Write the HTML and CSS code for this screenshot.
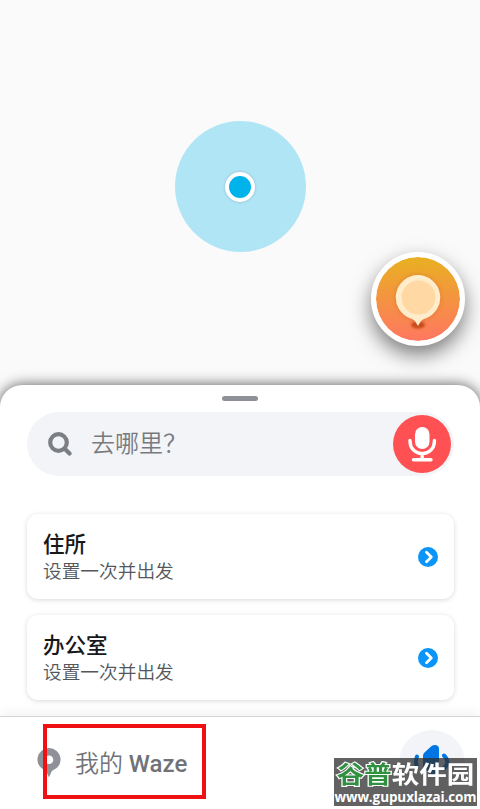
FILE: index.html
```html
<!DOCTYPE html>
<html lang="zh-CN">
<head>
    <meta charset="UTF-8">
    <meta name="viewport" content="width=device-width, initial-scale=1.0">
    <title>Waze</title>
    <link rel="stylesheet" href="styles.css">
</head>
<body>
    <div class="app">
        <div class="map">
            <div class="location"><div class="location-dot"></div></div>
            <button class="report-button" aria-label="报告">
                <svg width="84" height="84" viewBox="0 0 84 84">
                    <ellipse class="pin-shadow" cx="42" cy="68" rx="7" ry="3.5"/>
                    <path class="pin" d="M42 18a22.500 22.500 0 0 1 7 43.800c-3 .8-4 2-7 7.200-3-5.200-4-6.400-7-7.200A22.500 22.500 0 0 1 42 18z"/>
                    <circle class="pin-inner" cx="42.500" cy="40.500" r="17"/>
                </svg>
            </button>
        </div>

        <div class="sheet">
            <div class="handle"></div>
            <div class="search">
                <svg class="search-icon" width="24" height="24" viewBox="0 0 24 24">
                    <circle cx="10.500" cy="10.500" r="8.300"/>
                    <path d="M17 17l4.500 4.500"/>
                </svg>
                <span class="search-text">去哪里？</span>
                <button class="mic-button" aria-label="语音搜索">
                    <svg width="58" height="58" viewBox="0 0 58 58">
                        <rect class="mic-body" x="22" y="12" width="14.500" height="22" rx="7.250"/>
                        <path class="mic-line" d="M17 25.500v1a12.200 12.200 0 0 0 24.400 0v-1M29.200 38.500v6M20.500 44.800h17.500"/>
                    </svg>
                </button>
            </div>

            <div class="places">
                <div class="place">
                    <div class="place-info">
                        <div class="place-name">住所</div>
                        <div class="place-hint">设置一次并出发</div>
                    </div>
                    <svg class="arrow" width="20" height="20" viewBox="0 0 20 20">
                        <circle cx="10" cy="10" r="10"/>
                        <path d="M8.500 5.200l4.800 4.800-4.800 4.800"/>
                    </svg>
                </div>
                <div class="place">
                    <div class="place-info">
                        <div class="place-name">办公室</div>
                        <div class="place-hint">设置一次并出发</div>
                    </div>
                    <svg class="arrow" width="20" height="20" viewBox="0 0 20 20">
                        <circle cx="10" cy="10" r="10"/>
                        <path d="M8.500 5.200l4.800 4.800-4.800 4.800"/>
                    </svg>
                </div>
            </div>

            <div class="bottom-bar">
                <svg class="my-pin" width="24" height="30" viewBox="0 0 24 30">
                    <path fill-rule="evenodd" d="M12 0a11.500 11.500 0 0 1 4 22.300c-1.500.7-1.800 2.500-4 7.200-2.200-4.700-2.500-6.500-4-7.200A11.500 11.500 0 0 1 12 0zm0 7.500a4.300 4.300 0 1 0 0 8.600 4.300 4.300 0 0 0 0-8.600z"/>
                </svg>
                <span class="my-waze">我的 <b>Waze</b></span>
                <button class="sound-button" aria-label="声音">
                    <svg width="36" height="36" viewBox="0 0 36 36">
                        <path d="M10 9l7-6.500c3.500-2.500 8-1.500 8 2v25c0 3.500-4 5-7 2.500L13 27h-1a3 3 0 0 1-3-3V12a5 5 0 0 1 1-3z"/>
                        <path class="wave" d="M3 12.500q-2 5 0 10.500M30 11.500q6.500 6.500 0 13"/>
                    </svg>
                </button>
            </div>
        </div>

        <!-- Highlight around the "My Waze" entry -->
        <div class="highlight"></div>

        <div class="watermark">
            <div class="watermark-name"><span>谷普</span>软件园</div>
            <div class="watermark-url">www.gupuxlazai.com</div>
        </div>
    </div>
</body>
</html>
```
FILE: styles.css
```css
* {
    box-sizing: border-box;
}

body {
    margin: 0;
    font-family: Roboto, "Noto Sans CJK SC", sans-serif;
    background-color: #fafafa;
}

button {
    display: flex;
    justify-content: center;
    align-items: center;
    padding: 0;
    border: none;
    border-radius: 50%;
}

svg {
    display: block;
    flex-shrink: 0;
}

.app {
    position: relative;
    width: 480px;
    height: 809px;
    overflow: hidden;
}

.map {
    position: relative;
    height: 385px;
    padding-top: 121px;
}

.location {
    display: flex;
    justify-content: center;
    align-items: center;
    width: 131px;
    height: 131px;
    margin: 0 auto;
    border-radius: 50%;
    background: #b0e5f6;
}

.location-dot {
    width: 30px;
    height: 30px;
    border: 4px solid white;
    border-radius: 50%;
    background: #00b3ea;
    box-shadow: 0 0 3px rgba(0, 0, 0, 0.2);
}

.report-button {
    position: absolute;
    left: 371px;
    top: 252px;
    width: 94px;
    height: 94px;
    border: 5px solid white;
    background: linear-gradient(#e9b021, #ff7761);
    background-clip: padding-box;
    background-color: white;
    box-shadow: 0 9px 20px rgba(0, 0, 0, 0.5);
}

.pin-shadow {
    fill: #c74b1c;
    filter: blur(1px);
}

.pin {
    fill: #ffeccb;
    filter: drop-shadow(0 0 2px rgba(190, 80, 20, 0.4));
}

.pin-inner {
    fill: #ffd8a4;
}

.sheet {
    position: relative;
    display: flex;
    flex-direction: column;
    height: 424px;
    padding-top: 11px;
    border-radius: 22px 22px 0 0;
    background: white;
    box-shadow: 0 0 14px rgba(0, 0, 0, 0.65);
}

.handle {
    width: 36px;
    height: 5px;
    margin: 0 auto;
    border-radius: 3px;
    background: #8e9298;
}

.search {
    display: flex;
    align-items: center;
    height: 64px;
    margin: 11px 26px 0 27px;
    padding: 0 3px 0 21px;
    border-radius: 32px;
    background: #f2f4f8;
}

.search-icon {
    fill: none;
    stroke: #7b7e83;
    stroke-width: 4.2;
    stroke-linecap: round;
}

.search-text {
    flex: 1;
    margin-left: 19px;
    font-size: 24px;
    font-weight: 350;
    line-height: 34px;
    color: #777b80;
}

.mic-button {
    width: 58px;
    height: 58px;
    background: #ff5153;
}

.mic-body {
    fill: white;
}

.mic-line {
    fill: none;
    stroke: white;
    stroke-width: 3.4;
    stroke-linecap: round;
}

.places {
    display: flex;
    flex-direction: column;
    gap: 16px;
    margin: 38px 26px 0 27px;
}

.place {
    display: flex;
    justify-content: space-between;
    align-items: center;
    height: 85px;
    padding: 0 16px;
    border-radius: 11px;
    background: white;
    box-shadow: 0 1px 5px rgba(0, 0, 0, 0.15);
}

.place-name {
    padding-top: 2px;
    font-size: 21.5px;
    font-weight: 500;
    line-height: 30px;
    color: #16181a;
}

.place-hint {
    font-size: 18.7px;
    font-weight: 350;
    line-height: 25px;
    color: #54585d;
}

.arrow {
    fill: #0b95f8;
}

.arrow path {
    fill: none;
    stroke: white;
    stroke-width: 2.8;
    stroke-linecap: round;
    stroke-linejoin: round;
}

.bottom-bar {
    position: relative;
    display: flex;
    align-items: center;
    height: 93px;
    margin-top: auto;
    padding: 0 15px 0 37px;
    border-top: 1px solid #d3d4d5;
    background: white;
    box-shadow: 0 -4px 12px rgba(0, 0, 0, 0.05);
}

.my-pin {
    fill: #8e9298;
}

.my-waze {
    flex: 1;
    margin-left: 14px;
    padding-bottom: 3px;
    font-size: 24px;
    font-weight: 350;
    color: #6f7379;
}

.my-waze b {
    font-weight: 500;
}

.sound-button {
    width: 66px;
    height: 66px;
    padding-bottom: 2px;
    background: #f2f4f8;
}

.sound-button svg {
    fill: #0075e3;
}

.sound-button .wave {
    fill: none;
    stroke: #0075e3;
    stroke-width: 4;
    stroke-linecap: round;
}

.highlight {
    position: absolute;
    left: 43px;
    top: 724px;
    width: 163px;
    height: 75px;
    border: 4px solid #ee1013;
}

.watermark {
    position: absolute;
    left: 334px;
    top: 758px;
    width: 143px;
    height: 48px;
    background: rgba(45, 45, 45, 0.75);
    color: white;
    text-align: center;
    white-space: nowrap;
}

.watermark-name {
    height: 32px;
    padding-top: 3px;
    font-size: 27.5px;
    font-weight: 700;
    line-height: 29px;
    transform: scaleY(0.86);
}

.watermark-name span {
    color: #2f9140;
    -webkit-text-stroke: 2.5px white;
    paint-order: stroke fill;
}

.watermark-url {
    font-family: "Open Sans", sans-serif;
    font-size: 13.5px;
    font-weight: 700;
    line-height: 15px;
    letter-spacing: -0.1px;
}
```
